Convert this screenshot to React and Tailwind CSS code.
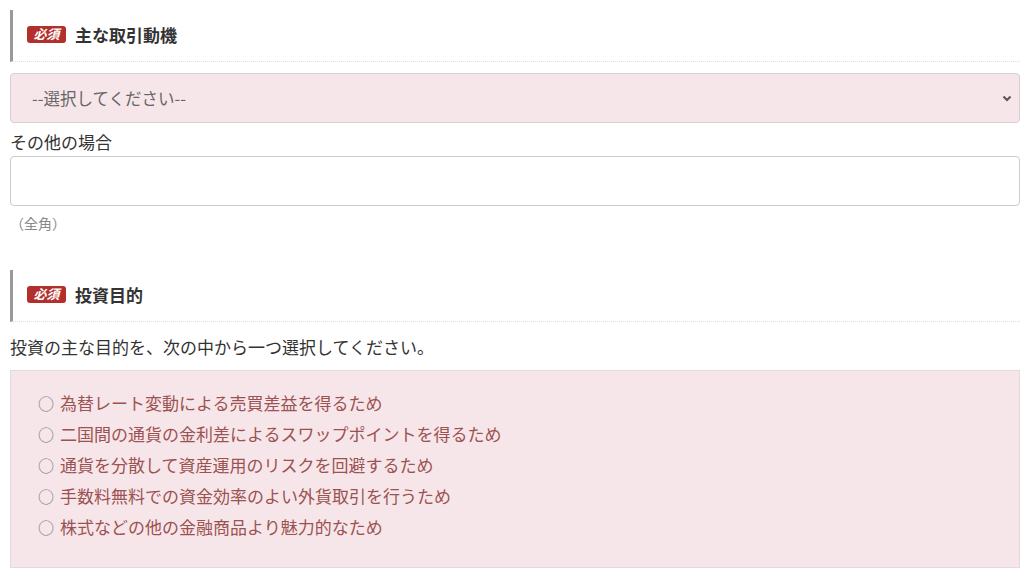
const font = { fontFamily: '"Noto Sans CJK JP", "Noto Sans", sans-serif' }

const reasons = [
  '為替レート変動による売買差益を得るため',
  '二国間の通貨の金利差によるスワップポイントを得るため',
  '通貨を分散して資産運用のリスクを回避するため',
  '手数料無料での資金効率のよい外貨取引を行うため',
  '株式などの他の金融商品より魅力的なため',
]

function Heading({ children }) {
  return (
    <div className="flex items-center h-[52px] border-l-[3px] border-[#999] border-b border-b-[#ddd] [border-bottom-style:dotted] pl-[14px] pb-[2px]">
      <span className="inline-flex items-center justify-center w-[39px] h-[17px] rounded-[3px] bg-[#b22f2b] text-white text-[13px] italic font-bold leading-none [font-family:'Liberation_Serif','Noto_Sans_CJK_JP',serif]">
        必須
      </span>
      <span className="ml-[9px] text-[17px] font-bold text-[#333]">{children}</span>
    </div>
  )
}

export default function App() {
  return (
    <div className="w-[1010px] ml-[10px] pt-[10px] text-[#333]" style={font}>
      <Heading>主な取引動機</Heading>

      <div className="mt-[11px] h-[50px] rounded-[4px] border border-[#d8cfd1] bg-[#f7e6e9] flex items-center justify-between pl-[21px] pr-[6px]">
        <span className="text-[16.5px] text-[#666]">--選択してください--</span>
        <svg width="12" height="12" viewBox="0 0 12 12">
          <path d="M2.5 4.5 L6 8 L9.5 4.5" fill="none" stroke="#555" strokeWidth="2" />
        </svg>
      </div>

      <div className="mt-[8px] text-[17px] leading-[22px] text-[#333]">その他の場合</div>
      <div className="mt-[3px] h-[50px] rounded-[4px] border border-[#ccc] bg-white" />
      <div className="mt-[7px] text-[14px] leading-[20px] text-[#888]">（全角）</div>

      <div className="mt-[37px]">
        <Heading>投資目的</Heading>
      </div>

      <div className="mt-[14px] text-[17px] leading-[22px] text-[#333]">
        投資の主な目的を、次の中から一つ選択してください。
      </div>

      <div className="mt-[12px] h-[198px] border border-[#e2dadc] bg-[#f7e6e9] pt-[16px] pl-[27px]">
        {reasons.map((r) => (
          <div key={r} className="flex items-center h-[31px] text-[17px] leading-none text-[#9c5252]">
            <span className="text-[#777] text-[16px] mr-[6px]">○</span>
            <span>{r}</span>
          </div>
        ))}
      </div>
    </div>
  )
}
